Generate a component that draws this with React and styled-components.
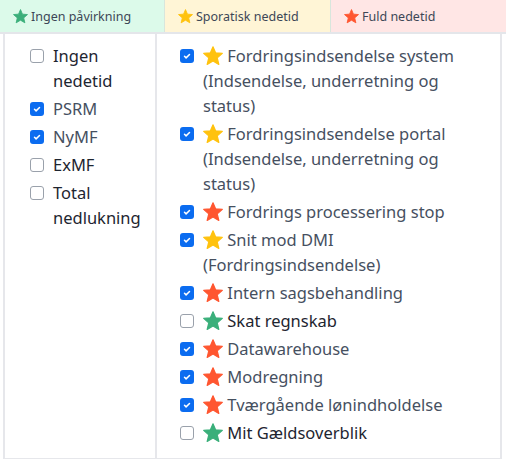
import styled, { createGlobalStyle } from 'styled-components';

const GlobalStyle = createGlobalStyle`
  body {
    margin: 0;
    background: #ffffff;
    font-family: 'Noto Sans', 'Open Sans', sans-serif;
  }
`;

const STAR_COLORS = {
  none: '#3aaf7a',
  sporadic: '#ffc20e',
  full: '#ff5630',
};

const legend = [
  { level: 'none', label: 'Ingen påvirkning', bg: '#dcfaea' },
  { level: 'sporadic', label: 'Sporatisk nedetid', bg: '#fff5d6' },
  { level: 'full', label: 'Fuld nedetid', bg: '#ffe6e5' },
];

const platforms = [
  { label: 'Ingen nedetid', checked: false },
  { label: 'PSRM', checked: true },
  { label: 'NyMF', checked: true },
  { label: 'ExMF', checked: false },
  { label: 'Total nedlukning', checked: false },
];

const services = [
  { label: 'Fordringsindsendelse system (Indsendelse, underretning og status)', level: 'sporadic', checked: true },
  { label: 'Fordringsindsendelse portal (Indsendelse, underretning og status)', level: 'sporadic', checked: true },
  { label: 'Fordrings processering stop', level: 'full', checked: true },
  { label: 'Snit mod DMI (Fordringsindsendelse)', level: 'sporadic', checked: true },
  { label: 'Intern sagsbehandling', level: 'full', checked: true },
  { label: 'Skat regnskab', level: 'none', checked: false },
  { label: 'Datawarehouse', level: 'full', checked: true },
  { label: 'Modregning', level: 'full', checked: true },
  { label: 'Tværgående lønindholdelse', level: 'full', checked: true },
  { label: 'Mit Gældsoverblik', level: 'none', checked: false },
];

// five point star, filling the 24 box
const STAR_PATH =
  'M12 0.9L15.1 8.2L23.2 8.9L17.1 14.2L19 22.1L12 17.9L5 22.1L6.9 14.2L0.8 8.9L8.9 8.2Z';

const Star = ({ level, size = 20 }) => (
  <StarIcon width={size} height={size} viewBox="0 0 24 24" $size={size}>
    <path d={STAR_PATH} fill={STAR_COLORS[level]} stroke={STAR_COLORS[level]} strokeWidth="1.4" strokeLinejoin="round" />
  </StarIcon>
);

const CheckBox = ({ checked }) => (
  <Box $checked={checked}>
    {checked && (
      <svg width="10" height="10" viewBox="0 0 20 20">
        <path d="M5 10.5l3.2 3.2L15 7" fill="none" stroke="#fff" strokeWidth="3" strokeLinecap="round" strokeLinejoin="round" />
      </svg>
    )}
  </Box>
);

const App = () => {
  return (
    <Page>
      <GlobalStyle />
      <Legend>
        {legend.map(item => (
          <LegendCell key={item.level} $bg={item.bg}>
            <Star level={item.level} size={15} />
            <span>{item.label}</span>
          </LegendCell>
        ))}
      </Legend>
      <Table>
        <Column>
          {platforms.map(item => (
            <CheckItem key={item.label} $checked={item.checked}>
              <CheckBox checked={item.checked} />
              <Label>{item.label}</Label>
            </CheckItem>
          ))}
        </Column>
        <Column $wide>
          {services.map(item => (
            <CheckItem key={item.label} $checked={item.checked}>
              <CheckBox checked={item.checked} />
              <Label>
                <Star level={item.level} /> {item.label}
              </Label>
            </CheckItem>
          ))}
        </Column>
      </Table>
    </Page>
  );
};

export default App;

const Page = styled.div`
  width: 506px;
  height: 459px;
  overflow: hidden;
`;

const Legend = styled.div`
  display: grid;
  grid-template-columns: 165px 166px 1fr;
  height: 32px;
  border-bottom: 2px solid #e4e6ea;
`;

const LegendCell = styled.div`
  display: flex;
  align-items: center;
  gap: 3px;
  padding-left: 13px;
  background: ${p => p.$bg};
  border-right: 1px solid #d8e6dc;
  font-size: 12.5px;
  color: #3d4756;
  &:last-child {
    border-right: none;
  }
`;

const StarIcon = styled.svg`
  flex-shrink: 0;
  overflow: visible;
  vertical-align: ${p => (p.$size > 16 ? '-4px' : '0')};
`;

const Table = styled.div`
  display: grid;
  grid-template-columns: 150px 1fr;
  margin: 0 4px 0 3px;
  height: 424px;
  border: 2px solid #e6e7eb;
  border-top: none;
`;

const Column = styled.div`
  padding: 9px 14px 0 ${p => (p.$wide ? '23px' : '25px')};
  border-left: ${p => (p.$wide ? '2px solid #e6e7eb' : 'none')};
`;

const CheckItem = styled.div`
  display: flex;
  align-items: flex-start;
  gap: 9px;
  margin-bottom: 3px;
  font-size: 16.5px;
  line-height: 25px;
  color: ${p => (p.$checked ? '#46505f' : '#1e2530')};
`;

const Box = styled.span`
  flex-shrink: 0;
  display: flex;
  align-items: center;
  justify-content: center;
  width: 14px;
  height: 14px;
  margin-top: 6px;
  box-sizing: border-box;
  border-radius: 3px;
  background: ${p => (p.$checked ? '#0b6cf0' : '#fff')};
  border: ${p => (p.$checked ? 'none' : '1px solid #9aa1ab')};
`;

const Label = styled.span`
  min-width: 0;
`;
